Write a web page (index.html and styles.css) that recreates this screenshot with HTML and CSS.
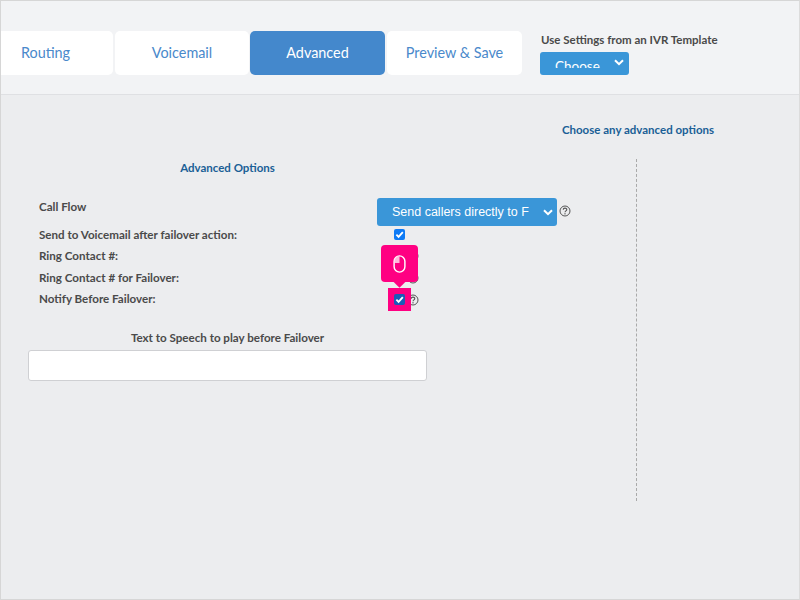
FILE: index.html
```html
<!DOCTYPE html>
<html lang="en">
<head>
<meta charset="utf-8">
<title>Advanced</title>
<link rel="stylesheet" href="styles.css">
</head>
<body>
<div class="frame">
  <header class="top">
    <nav class="tabs">
      <a class="tab tab-first">Routing</a>
      <a class="tab tab-voicemail">Voicemail</a>
      <a class="tab tab-active">Advanced</a>
      <a class="tab">Preview &amp; Save</a>
    </nav>
    <div class="template">
      <div class="template-label">Use Settings from an IVR Template</div>
      <div class="template-select">
        <span class="template-value">Choose</span>
        <svg class="chev" viewBox="0 0 10 7" width="10" height="7"><path d="M1 1.2 5 5.2 9 1.2" fill="none" stroke="#fff" stroke-width="2"/></svg>
      </div>
    </div>
  </header>
  <main class="content">
    <h2 class="hint">Choose any advanced options</h2>
    <div class="columns">
      <section class="form">
        <h3 class="form-title">Advanced Options</h3>
        <div class="row row-flow">
          <span class="label">Call Flow</span>
          <div class="control">
            <div class="flow-select">
              <span class="flow-value">Send callers directly to F</span>
              <svg class="chev" viewBox="0 0 10 7" width="10" height="7"><path d="M1 1.2 5 5.2 9 1.2" fill="none" stroke="#fff" stroke-width="2"/></svg>
            </div>
            <svg class="help" viewBox="0 0 12 12" width="12" height="12"><circle cx="6" cy="6" r="5" fill="none" stroke="#555" stroke-width="1"/><path d="M4.2 4.7C4.2 2.6 7.8 2.6 7.8 4.6 7.8 5.9 6 5.8 6 7.3" fill="none" stroke="#555" stroke-width="1.1"/><rect x="5.4" y="8.2" width="1.2" height="1.2" fill="#555"/></svg>
          </div>
        </div>
        <div class="row row-vm">
          <span class="label">Send to Voicemail after failover action:</span>
          <div class="control control-check"><span class="check"><svg viewBox="0 0 12 12" width="11" height="11"><path d="M2.6 6.2 5 8.6 9.6 3.4" fill="none" stroke="#fff" stroke-width="2"/></svg></span></div>
        </div>
        <div class="row row-ring">
          <span class="label">Ring Contact #:</span>
          <div class="control"><svg class="help help-hidden" viewBox="0 0 12 12" width="12" height="12"><circle cx="6" cy="6" r="5" fill="none" stroke="#555"/></svg></div>
        </div>
        <div class="row row-ring2">
          <span class="label">Ring Contact # for Failover:</span>
          <div class="control"><svg class="help help-hidden" viewBox="0 0 12 12" width="12" height="12"><circle cx="6" cy="6" r="5" fill="none" stroke="#555"/></svg></div>
        </div>
        <div class="row row-notify">
          <span class="label">Notify Before Failover:</span>
          <div class="control control-check">
            <span class="check check-dark"><svg viewBox="0 0 12 12" width="11" height="11"><path d="M2.6 6.2 5 8.6 9.6 3.4" fill="none" stroke="#fff" stroke-width="2"/></svg></span>
            <svg class="help" viewBox="0 0 12 12" width="12" height="12"><circle cx="6" cy="6" r="5" fill="none" stroke="#555" stroke-width="1"/><path d="M4.2 4.7C4.2 2.6 7.8 2.6 7.8 4.6 7.8 5.9 6 5.8 6 7.3" fill="none" stroke="#555" stroke-width="1.1"/><rect x="5.4" y="8.2" width="1.2" height="1.2" fill="#555"/></svg>
          </div>
        </div>
        <div class="tts-label">Text to Speech to play before Failover</div>
        <input class="tts-input" type="text" aria-label="Text to Speech">
      </section>
      <div class="divider"></div>
    </div>
    <div class="spot"></div>
    <div class="bubble">
      <svg viewBox="0 0 14 20" width="13" height="18"><rect x="1" y="1" width="12" height="18" rx="6" fill="none" stroke="#fff" stroke-width="1.6"/><path d="M7 1A6 6 0 0 0 1 7V9H7Z" fill="#ffd9ea" fill-opacity=".85"/></svg>
    </div>
  </main>
</div>
</body>
</html>
```
FILE: styles.css
```css
* { box-sizing: border-box; }
html, body { margin: 0; height: 100%; }
body { font-family: "Lato", "Open Sans", sans-serif; color: #4a4a4a; }
.frame {
  width: 800px; height: 600px; overflow: hidden; position: relative;
  border: 1px solid #d6d6d6; border-right-color: #dcdcdc;
  background: #ecedef; display: flex; flex-direction: column;
}
.top {
  height: 94px; flex: none; background: #f2f3f5; border-bottom: 1px solid #dfe0e3;
  display: flex; align-items: flex-start; padding-top: 30px;
}
.tabs { display: flex; gap: 1px; margin-left: -23px; }
.tab {
  height: 44px; width: 135px; background: #fff; border-radius: 5px; color: #4a89cb;
  display: flex; align-items: center; justify-content: center; font-size: 14.4px; flex: none;
  padding-bottom: 2px;
}
.tab-first { margin-right: 1px; }
.tab-voicemail { width: 134px; }
.tab-active { background: #4488cc; color: #fff; margin-right: 1px; }
.template { margin-left: 18px; }
.template-label { font-size: 11.5px; font-weight: 700; line-height: 14px; margin-top: 2px; padding-left: 1px; color: #4a4a4a; }
.template-select {
  margin-top: 5px; width: 89px; height: 23px; background: #3a96d8; border-radius: 3px;
  position: relative; padding: 8px 0 0 15px;
}
.template-value { display: block; height: 8px; overflow: hidden; color: #fff; font-size: 13.5px; line-height: 13px; width: 50px; }
.template-select .chev { position: absolute; right: 5px; top: 7px; }
.content { flex: 1; position: relative; display: flex; flex-direction: column; }
.hint {
  margin: 28px 0 0; padding-left: 474px; width: 800px; text-align: center;
  font-size: 11.5px; line-height: 14px; font-weight: 700; color: #1a5f96;
}
.columns { display: flex; margin-top: 22px; flex: none; }
.form { width: 453px; padding-top: 2px; }
.form-title { margin: 0; text-align: center; font-size: 11.5px; line-height: 14px; font-weight: 700; color: #1a5f96; }
.row { display: flex; position: relative; }
.label { width: 376px; padding-left: 38px; padding-top: 1px; font-size: 11.6px; font-weight: 700; line-height: 14px; flex: none; color: #4a4a4a; }
.control { display: flex; align-items: flex-start; }
.row-flow { margin-top: 23px; height: 28px; }
.row-flow .label { padding-top: 2px; }
.flow-select {
  width: 180px; height: 28px; background: #3a96d8; border-radius: 3px; color: #fff;
  display: flex; align-items: center; justify-content: space-between;
  padding: 0 4px 0 15px; font: 12.5px "Liberation Sans", sans-serif; flex: none;
}
.row-flow .help { margin: 7px 0 0 2px; }
.row-vm { height: 22px; }
.row-vm .label { padding-top: 2px; }
.row-ring { height: 22px; }
.row-ring2 { height: 21px; }
.row-notify { height: 21px; }
.control-check { padding-left: 17px; }
.check { width: 11px; height: 11px; background: #0d7af5; border-radius: 2px; display: block; overflow: hidden; flex: none; margin-top: 3px; }
.check svg { display: block; }
.check-dark { background: #1a5cb8; position: relative; z-index: 2; }
.control-check .help { margin: 3px 0 0 2px; }
.help-hidden { margin: 2px 0 0 30px; }
.tts-label { margin-top: 19px; text-align: center; font-size: 11.6px; font-weight: 700; line-height: 14px; color: #4a4a4a; }
.tts-input {
  display: block; margin: 5px 0 0 27px; width: 399px; height: 31px;
  background: #fff; border: 1px solid #cfd0d3; border-radius: 3px; outline: none;
}
.divider { margin-left: 182px; width: 0; height: 342px; border-left: 1px dashed #a9a9a9; }
.spot { position: absolute; left: 387px; top: 193px; width: 23px; height: 23px; background: #ff0082; z-index: 1; }
.bubble {
  position: absolute; left: 380px; top: 150px; width: 37px; height: 37px; z-index: 3;
  background: #ff0082; border-radius: 4px; display: flex; align-items: center; justify-content: center;
}
.bubble::after {
  content: ""; position: absolute; left: 14px; bottom: -4px; width: 9px; height: 9px;
  background: #ff0082; transform: rotate(45deg);
}
```
